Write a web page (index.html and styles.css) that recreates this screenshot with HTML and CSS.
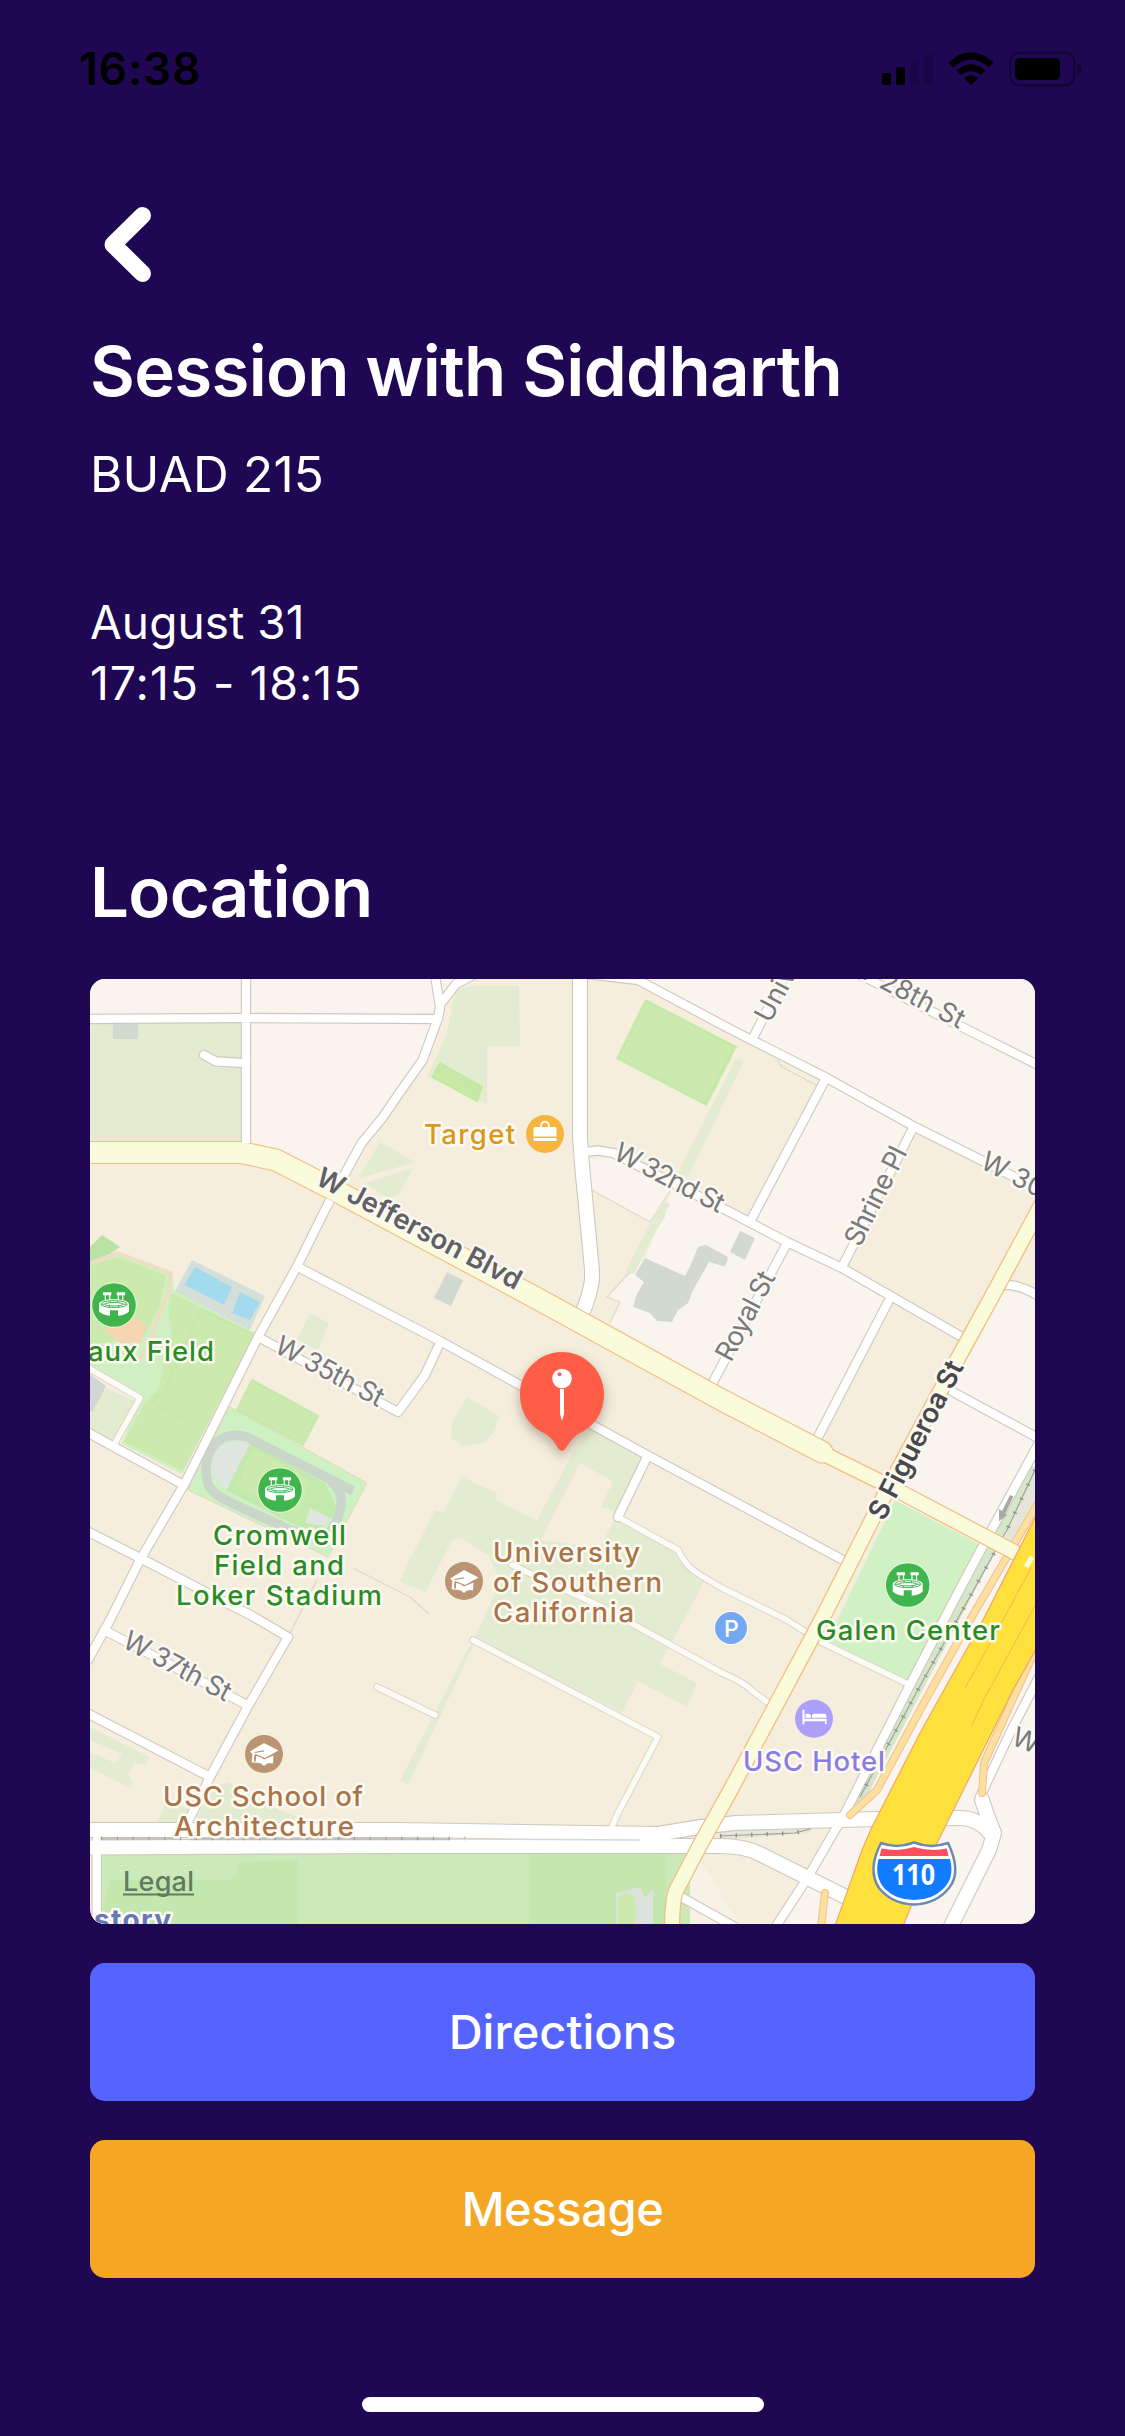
FILE: index.html
```html
<!DOCTYPE html>
<html lang="en">
<head>
<meta charset="utf-8">
<title>Session</title>
<link rel="stylesheet" href="styles.css">
</head>
<body>
<div class="screen">
  <header class="status">
    <span class="time">16:38</span>
    <svg class="indicators" width="204" height="40" viewBox="880 49 204 40">
      <rect x="882" y="73" width="9" height="12" rx="2"/>
      <rect x="896" y="67" width="9" height="18" rx="2"/>
      <rect x="910" y="60.500" width="9" height="24.500" rx="2" opacity=".16"/>
      <rect x="924" y="54" width="9" height="31" rx="2" opacity=".16"/>
      <path d="M948.500 62.500Q971 42 993.500 62.500L989 67.500Q971 51.500 953 67.500ZM956.500 70.500Q971 58 985.500 70.500L981 75Q971 67.500 961 75ZM964 78Q971 72.500 978 78L971 85Z"/>
      <rect x="1010.200" y="52.700" width="64" height="32.500" rx="9" fill="none" stroke="#000" stroke-width="2.400" opacity=".35"/>
      <rect x="1015" y="58" width="45" height="22" rx="4.500"/>
      <path d="M1077.500 63.500Q1082 65.500 1082 69T1077.500 74.500Z" opacity=".35"/>
    </svg>
  </header>

  <main class="content">
    <nav class="nav">
      <svg class="back" width="80" height="90" viewBox="90 200 80 90"><path d="M142.500 215.500L113 244.500L142.500 273.500"/></svg>
    </nav>
    <h1 class="title">Session with Siddharth</h1>
    <p class="course">BUAD 215</p>
    <div class="when"><p class="date">August 31</p><p class="hours">17:15 - 18:15</p></div>
    <h2 class="title place">Location</h2>

    <svg class="map" viewBox="90 979 945 945">
      <defs>
        <g id="stadium">
          <circle r="22.700" fill="#fff" opacity=".6"/><circle r="21.800" fill="#40b44d"/>
          <path fill="#fff" d="M-11-12.800h8.300v3h-8.300zM2.800-12.800h8.300v3h-8.300zM-9.300-10h1.200v6h-1.200zM-4.800-10h1.200v6h-1.200zM3.700-10h1.200v6h-1.200zM8.200-10h1.200v6h-1.200zM-15-1C-15-7.500 15-7.500 15-1V6.500Q12 10 4 10.700V5.300H-4V10.700Q-12 10-15 6.500Z"/>
          <path fill="none" stroke="#40b44d" stroke-width="1" d="M-13-.8C-13-5.500 13-5.500 13-.8C13 3.600-13 3.600-13-.8ZM-9.500-.8C-8-3 8-3 9.500-.8C8 1.500-8 1.500-9.500-.8ZM-4-4.200L-3-2.500M4-4.200L3-2.500M-4 .8L-5 2.500M4 .8L5 2.500M-13-.8H-9.500M9.500-.8H13"/>
        </g>
        <g id="school">
          <circle r="19" fill="#ba9473"/>
          <path fill="#fff" d="M-14-2.500L0-11L14.500-3.500L1 4Q-4 1.500-9 0L-10 3L-9.500 9L-12.500 8L-11.500 0ZM-8 2Q-4 1.800 0 5.500L9.500 1.500L9 9.500Q4 7.500 0 12Q-4 7.500-9 9L-8 6Z"/>
          <path d="M-9.500-1.500L0-3.200" stroke="#ba9473" stroke-width="1.200"/>
        </g>
        <path id="roads" d="M85 1019L240 1018L438 1019M246 970V1143M204 1055L215.700 1061.300L243 1063M435 975L440 1007L438 1018L422.700 1060L400 1092L383 1117L361.700 1143L343 1177L330 1200L296.700 1267L258 1337L185 1483L140 1560L110 1620L88 1660M442 1002L456 984L475 974M587 974L638 980L730 1029L826.700 1078L915 1127L987 1163L1040 1190M753 1038L790 965M825 1080L752 1218M913 1128L842 1267M585 1152L598 1150.500L613 1153L730 1212L787 1242L842 1268L962 1337M785 1247L712 1384M888 1302L818 1437M855 972L958 1025L1040 1066M953 1392L1040 1439M1040 1441L986 1540L950 1608L910 1685L845 1813L808 1877L775 1928M1004 1285Q1020 1284 1040 1297M298 1267L440 1341L647 1455L720 1494L843 1560M260 1338L398 1412L425 1375L438 1347M85 1431L180 1483M85 1530L140 1558L254 1617L288 1637L247 1708L210 1777L188 1822M104 1630L247 1705M85 1712L210 1777M647 1457L618 1517M96.700 1840V1930M1040 1675L1010 1733L980 1797M683 1898L735 1927"/>
        <path id="paths" d="M85 1366L140 1398L115 1443M377 1687L435 1715M473 1640L658 1737L618 1813L611 1829M512 1565L600 1606L720 1672Q745 1683 751 1690L770 1704M618 1517L678 1550Q685 1566 700 1575L720 1587L787 1620L823 1643L908 1684"/>
        <path id="wide" d="M85 1830H400L657 1834L700 1827L735 1823L877 1819L960 1818Q978 1818 990 1833M85 1847.500L400 1846H720Q745 1846 760 1854L850 1899M580 970V1137L582 1165L592 1270V1280Q590 1295 582 1314M982 1800L987 1815L994 1833L989 1850L950 1928"/>
        <path id="jeff" d="M80 1152.500H241L276 1160L340 1193L538 1299L720 1399L822 1452"/>
        <path id="fig" d="M820 1452L887 1485L1018 1554M1045 1198L990 1300L957 1360L882 1500L823 1617L730 1791L700 1845L678 1887Q672 1895 672 1930"/>
        <path id="ramp" d="M1040 1500L970 1620L920 1710L877 1790L850 1815M1040 1640L1017 1690L984 1763L982 1793M825 1893L821 1928"/>
      </defs>

      <!-- land -->
      <path fill="#f5eedd" d="M90 979h945v945H90z"/>
      <g fill="#f9f4ed">
        <path d="M90 979H435L440 1007L422 1060L362 1143L335 1190L284 1155L246 1143V1019H90Z"/>
        <path d="M442 1002L456 984L475 979H435Z"/>
        <path d="M638 979L915 1127L1035 1187V979Z"/>
        <path d="M825 1080L752 1218L842 1267L913 1128Z"/>
        <path d="M588 1160L613 1157L672 1188L650 1222L592 1190Z"/>
        <path d="M672 1188L842 1267L888 1300L818 1440L610 1324L620 1302L607 1297L627 1275L645 1258L670 1195Z"/>
        <path d="M1004 1285L1035 1297V1520L1017 1553L882 1497L957 1357Z"/>
        <path d="M1035 1440L978 1545L833 1830L778 1924H1035Z"/>
        <path d="M683 1898L700 1860L740 1924H673Z" opacity=".6"/>
      </g>
      <g fill="none" stroke="#e3d9c6" stroke-width="1.300">
        <path d="M592 1190L650 1222L674 1185M665 1215L627 1275M620 1302L607 1297L627 1275L637 1268M620 1302L610 1323M777 1060L782 1067L818 1086"/>
        <path d="M353 1568L410 1597L429 1614M317 1580L288 1637" stroke="#dcd8cf"/>
      </g>

      <!-- soft greens -->
      <g fill="#e3ecd0">
        <path d="M90 1019H246V1141H90Z"/>
        <path d="M453 1000Q457 986 475 986H519L520 1046H487V1104L427 1077L447 1033Z"/>
        <path d="M380 1142L415 1162L358 1179ZM413 1168L400 1193L390 1200L365 1183Z"/>
        <path d="M735 1060Q741 1057 743 1063L688 1177L678 1173ZM662 1201L670 1204L634 1274L625 1272Z"/>
        <path d="M467 1397L499 1416L493 1433L483 1443L463 1447L450 1437L453 1420Z"/>
        <path d="M310 1313L329 1323L318 1350L297 1340Z"/>
        <path d="M462 1477L497 1493L496 1500L537 1520L577 1445L590 1428L643 1452L620 1512L601 1507L612 1483L609 1479L580 1463L541 1540L600 1548L615 1518L672 1550L704 1582L660 1664L697 1683L687 1707L638 1681L622 1712L475 1642L408 1785L400 1780L483 1620L500 1580L488 1555L460 1538L452 1540L425 1593L400 1580L435 1510L443 1512Z"/>
        <path d="M90 1727L150 1757L145 1765L135 1763L128 1773L133 1783L130 1788L90 1768ZM157 1822L167 1800L190 1810L185 1822ZM213 1787L228 1782L268 1805L307 1821L195 1822ZM410 1555L400 1582L413 1587Z"/>
      </g>
      <path fill="#f5eedd" d="M90 1740L123 1754L115 1763L90 1752Z"/>

      <!-- playing fields -->
      <path fill="#d0f0c3" d="M90 1262L118 1252L172 1272L174 1290L255 1333L182 1474L122 1444L140 1396L90 1370Z"/>
      <path fill="#b9e2a4" d="M90 1247L102 1235L120 1247L110 1254L90 1262Z"/>
      <g fill="#cdeaae">
        <path d="M90 1265L120 1257L166 1276L160 1305L144 1337L90 1345Z"/>
        <path d="M172 1293L255 1334L183 1471L123 1442L145 1403L158 1390L172 1330L168 1310Z"/>
      </g>
      <path fill="none" stroke="#c5e9ab" stroke-width="2.500" d="M200 1310L165 1390L150 1402M150 1402L198 1426M202 1310L255 1335"/>
      <path fill="none" stroke="#efdcc2" stroke-width="3.500" d="M90 1263L118 1253L171 1273L169 1290L155 1325L150 1345L135 1364"/>
      <path fill="#f6d5b4" d="M104 1330L118 1315L134 1316L147 1326L140 1343L120 1343Z"/>
      <path fill="#d5dfda" d="M192 1260L265 1296L250 1330L175 1291Z"/>
      <path fill="#a4daee" d="M195 1267L232 1287L224 1305L184 1285ZM240 1292L260 1302L250 1320L232 1313Z"/>
      <path fill="#d3d7d3" d="M90 1374L106 1386L94 1412H90Z"/>
      <path fill="#e3ecd0" d="M106 1388L138 1402L115 1442L90 1430V1415Z"/>
      <path fill="#cdf1c2" stroke="#e3d9bd" d="M230 1407L367 1483L328 1557L188 1490Z"/>
      <path fill="#cdeaae" stroke="#c5e9ab" stroke-width="2" d="M252 1380L318 1416L303 1445L237 1410Z"/>
      <path fill="#c3e9ad" d="M250 1443L325 1483L338 1510L315 1535L226 1490Z"/>
      <path fill="#cdeaae" d="M253 1449L310 1480L300 1515L237 1488Z"/>
      <path fill="#dfe6df" d="M250 1443L227 1489Q205 1475 215 1452Q228 1436 250 1443ZM310 1508L333 1520L322 1526L305 1523Z"/>
      <path fill="none" stroke="#cbd6ca" stroke-width="9.500" d="M353 1491L247 1437C213 1427 199 1462 209 1486C216 1500 245 1508 290 1530L325 1540M322 1475C346 1488 346 1508 330 1532"/>
      <path fill="#cdeaae" stroke="#c4eaa8" stroke-width="3" d="M646 1001L735 1047L706 1104L618 1058Z"/>
      <path fill="#c8e9a6" stroke="#c0ea9f" stroke-width="2" d="M440 1063L482 1087L477 1101L433 1077Z"/>

      <!-- park -->
      <path fill="#cce9b9" d="M100 1853H690V1924H100Z"/>
      <path fill="#c4e7af" d="M110 1880H228Q238 1880 238 1862L298 1860V1924H100ZM529 1853H666V1924H529Z"/>
      <path fill="#dbe3dc" d="M616 1893L640 1887L645 1898L653 1888V1924H616Z"/>
      <path fill="#cdeaae" d="M618 1898Q626 1889 634 1896L637 1910L634 1924H618Z"/>

      <!-- buildings -->
      <g fill="#d2d9d1">
        <path d="M113 1024H138V1039H113Z"/>
        <path d="M447 1272L463 1280L451 1306L434 1298Z"/>
        <path d="M645 1258L685 1276L692 1262L698 1247L706 1245L728 1257L723 1266L709 1262L692 1292L688 1303L678 1310L672 1322L657 1321L650 1313L633 1307L637 1294L644 1282L635 1275Z"/>
        <path d="M740 1231L755 1238L745 1260L730 1252ZM720 1254L728 1259L725 1266L720 1265Z"/>
      </g>
      <path fill="#d0f1c4" d="M895 1500L980 1545L908 1683L828 1640Z"/>
      <path fill="none" stroke="#d5e7c8" stroke-width="11" d="M1035 1467L987 1556L918 1687L856 1805"/>
      <path fill="#e5e5d8" d="M1035 1473L1011 1520L1004 1540L1016 1546L1035 1505ZM720 1829L815 1826L808 1833L720 1840Z"/>

      <!-- roads -->
      <g fill="none" stroke-linejoin="round" stroke-linecap="round">
        <use href="#paths" stroke="#dcd5ca" stroke-width="7.500"/>
        <use href="#roads" stroke="#cfc7bf" stroke-width="10.400"/>
        <use href="#wide" stroke="#cfc7bf" stroke-width="16"/>
        <use href="#paths" stroke="#fdfbf6" stroke-width="5.500"/>
        <use href="#roads" stroke="#fff" stroke-width="8.200"/>
        <use href="#wide" stroke="#fff" stroke-width="13.800"/>
        <path d="M101 1838.500H179M190 1839H450" stroke="#c4c1bb" stroke-width="2.600" stroke-linecap="butt"/>
        <path d="M101 1838.500H470" stroke="#9c9c9b" stroke-width="3.500" stroke-dasharray="1.200 14.600" stroke-linecap="butt"/>
        <path d="M450 1839L550 1839.500L640 1840" stroke="#ddd6d0" stroke-width="1.300" stroke-linecap="butt"/>
        <path d="M1035 1470L1007 1530L957 1620L920 1686L860 1797M720 1836L795 1833L810 1829" stroke="#9fa39b" stroke-width="1.200"/>
        <path d="M1035 1470L1007 1530L957 1620L920 1686L860 1797M720 1836L795 1833L810 1829" stroke="#8f9293" stroke-width="4" stroke-dasharray="1.500 14" stroke-linecap="butt"/>
        <use href="#ramp" stroke="#f3bf8f" stroke-width="8"/>
        <use href="#ramp" stroke="#fddf9f" stroke-width="6"/>
        <use href="#jeff" stroke="#f2bd80" stroke-width="23"/>
        <use href="#fig" stroke="#f2bd80" stroke-width="16.500"/>
        <use href="#jeff" stroke="#fafbdb" stroke-width="20.800"/>
        <use href="#fig" stroke="#fafbdb" stroke-width="14"/>
        <path d="M246 1140V1143M330 1200L328 1204" stroke="#fff" stroke-width="8" stroke-linecap="butt"/>
      </g>
      <path fill="#ffe13e" stroke="#f4a868" stroke-width="1.300" d="M1040 1508L983 1620L920 1733L872 1827L862 1850L835 1926H903L937 1843L1013 1690L1040 1642Z"/>
      <path fill="none" stroke="#f3b54b" stroke-width="1" d="M1031 1568L1003 1620L965 1688M1035 1606L985 1697L972 1725"/>
      <path stroke="#fafbdb" stroke-width="5" d="M1026 1567L1032 1557"/>
      <path fill="#a9a9a9" d="M1010 1495L1013.500 1496.500L1005 1514L1007.500 1515L999 1521V1509L1002 1511Z"/>

      <!-- street names -->
      <g class="street">
        <text transform="translate(612 1158.500) rotate(27.200)" textLength="120">W 32nd St</text>
        <text transform="translate(770 1024) rotate(-62)">University Ave</text>
        <text transform="translate(959 1029) rotate(27.500)" text-anchor="end">W 28th St</text>
        <text transform="translate(860 1248) rotate(-63.500)" textLength="107">Shrine Pl</text>
        <text transform="translate(979 1167.500) rotate(27)">W 30th St</text>
        <text transform="translate(731 1363) rotate(-62.300)" textLength="97">Royal St</text>
        <text transform="translate(273 1351.500) rotate(28)" textLength="119">W 35th St</text>
        <text transform="translate(121 1646.500) rotate(28)" textLength="118">W 37th St</text>
        <text transform="translate(1010 1744) rotate(22)">W 37th</text>
      </g>
      <g class="street main">
        <text transform="translate(314 1183.500) rotate(27.900)" textLength="228">W Jefferson Blvd</text>
        <text class="dark" transform="translate(884 1522) rotate(-62.700)" textLength="175">S Figueroa St</text>
      </g>

      <!-- places -->
      <g class="poi green">
        <text x="88" y="1361" textLength="126">aux Field</text>
        <text x="213" y="1545" textLength="133">Cromwell</text>
        <text x="214" y="1575" textLength="130">Field and</text>
        <text x="176" y="1605" textLength="206">Loker Stadium</text>
        <text x="816" y="1640" textLength="184">Galen Center</text>
      </g>
      <g class="poi brown">
        <text x="493" y="1562" textLength="147">University</text>
        <text x="493" y="1592" textLength="169">of Southern</text>
        <text x="493" y="1622" textLength="141">California</text>
        <text x="163" y="1806" textLength="200">USC School of</text>
        <text x="174" y="1836" textLength="180">Architecture</text>
      </g>
      <text class="poi gold" x="424" y="1144" textLength="91">Target</text>
      <text class="poi violet" x="743" y="1771" textLength="142">USC Hotel</text>
      <text class="poi blue" x="94" y="1930" textLength="77">story</text>
      <text class="legal" x="123" y="1891" textLength="71">Legal</text>
      <path stroke="#5f7c5f" stroke-width="1.800" d="M123 1894.500H194"/>

      <use href="#stadium" x="114" y="1305"/>
      <use href="#stadium" x="280" y="1490"/>
      <use href="#stadium" x="907.700" y="1585"/>
      <use href="#school" x="464" y="1581"/>
      <use href="#school" x="264" y="1754"/>
      <g transform="translate(545 1134)">
        <circle r="19" fill="#f7b53e"/>
        <path fill="#fff" d="M-11.500-5.500Q-11.500-7-10-7H10Q11.500-7 11.500-5.500V2.500H-11.500ZM-11.500 4H11.500V7H-11.500Z"/>
        <path fill="none" stroke="#fff" stroke-width="1.800" d="M-4-7C-4-14 4-14 4-7"/>
      </g>
      <g transform="translate(814 1718.700)">
        <circle r="19" fill="#ada0fc"/>
        <path fill="#fff" d="M-11.500-9h2V0H12.500V5.500H11V2.500H-9.500V5.500H-11.500ZM-8.500-1V-5H-5.500Q-4-5-3-3.500V-1ZM-2-1V-3.500L-.5-5H11Q12.500-4.500 12.500-1Z"/>
      </g>
      <circle cx="731" cy="1628" r="17" fill="#fff" opacity=".7"/>
      <circle cx="731" cy="1628" r="16" fill="#74a9f1"/>
      <text class="parking" x="731.500" y="1636.500" text-anchor="middle">P</text>

      <!-- interstate shield -->
      <path fill="#fff" stroke="#6f88ae" stroke-width="2.500" stroke-linejoin="round" d="M881 1843Q897 1849 914 1842.500Q931 1849 948 1843Q962 1872 949 1888Q936 1904 914 1904.500Q892 1904 879 1888Q867 1870 881 1843Z"/>
      <path fill="#ff4f5e" d="M881.500 1848.500Q899 1852 914 1847Q930 1852 947 1848.500L948.500 1856H879.500Z"/>
      <path fill="#117cff" d="M878.500 1859H950Q955 1878 943 1889Q932 1900 914 1900Q896 1900 885 1889Q874 1877 878.500 1859Z"/>
      <text class="shield" x="892" y="1885" textLength="43" lengthAdjust="spacingAndGlyphs">110</text>

      <!-- session pin -->
      <g class="pin">
        <path fill="#ff5d48" d="M562 1352C585 1352 604 1371 604 1394C604 1415 592 1428 578 1434Q571 1439 566 1448Q562 1454 558 1448Q553 1439 546 1434C532 1428 520 1415 520 1394C520 1371 539 1352 562 1352Z"/>
      </g>
      <circle cx="562" cy="1378.500" r="9.800" fill="#fff"/>
      <circle cx="559.500" cy="1374.200" r="2" fill="#ff5d48"/>
      <path fill="#fff" d="M560 1389H564V1414L562 1421L560 1414Z"/>
    </svg>

    <div class="actions">
      <button class="button directions">Directions</button>
      <button class="button message">Message</button>
    </div>
  </main>
  <div class="home"></div>
</div>
</body>
</html>
```

FILE: styles.css
```css
* { box-sizing: border-box; margin: 0; padding: 0; }
body { background: #1f0754; font-family: Inter, "Liberation Sans", sans-serif; color: #fff; }
.screen { width: 1125px; height: 2436px; display: flex; flex-direction: column; overflow: hidden; }
.status { height: 200px; padding: 42px 41px 0 79px; display: flex; justify-content: space-between; align-items: flex-start; color: #000; }
.time { font-size: 44.5px; line-height: 54px; font-weight: 600; letter-spacing: 0.8px; }
.indicators { margin-top: 7px; display: block; }
.content { padding: 0 90px; }
.nav { height: 129px; }
.back { display: block; fill: none; stroke: #fff; stroke-width: 17px; stroke-linecap: round; stroke-linejoin: round; }
.title { font-size: 69px; line-height: 84px; font-weight: 600; letter-spacing: -0.7px; white-space: nowrap; }
.course { margin-top: 31px; font-size: 49.5px; line-height: 60px; letter-spacing: 0.2px; }
.when { margin-top: 88px; font-size: 46px; line-height: 61px; }
.date { letter-spacing: 0.1px; }
.hours { font-size: 46.5px; letter-spacing: 0.95px; }
.place { margin-top: 136px; }
.map { display: block; width: 945px; height: 945px; margin-top: 45px; border-radius: 15px; overflow: hidden; }
.actions { margin-top: 39px; display: flex; flex-direction: column; gap: 39px; }
.button { height: 138px; border: 0; border-radius: 15px; color: #fff; font: 550 47px/58px Inter, "Liberation Sans", sans-serif; }
.directions { background: #5664ff; }
.message { background: #f5a623; letter-spacing: -0.4px; }
.home { width: 402px; height: 15px; margin: 119px auto 0; border-radius: 8px; background: #fff; }

.map text { paint-order: stroke; stroke-linejoin: round; }
.street text { font-size: 27px; fill: #77797c; stroke: #fbf8f2; stroke-width: 5px; }
.main text { font-size: 27.5px; font-weight: 600; fill: #606164; }
.main .dark { fill: #48494b; }
.poi { font-size: 27.5px; font-weight: 550; stroke: #fdfaf4; stroke-width: 5px; }
.green { fill: #2b8c26; }
.brown { fill: #a97548; }
.gold { fill: #d9981b; }
.violet { fill: #8b7ce0; }
.blue { fill: #6678b5; font-weight: 700; font-size: 28px; }
.legal { font-size: 27px; font-weight: 500; fill: #5f7c5f; }
.parking { font-size: 23px; font-weight: 500; fill: #fff; }
.shield { font-size: 28px; font-weight: 700; font-family: "Open Sans", sans-serif; fill: #fff; }
.pin { filter: drop-shadow(0 5px 6px rgba(60, 40, 20, .35)); }
```
